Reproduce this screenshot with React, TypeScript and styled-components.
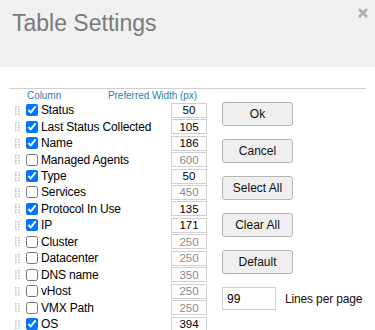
import React from 'react';
import styled, { createGlobalStyle } from 'styled-components';

const GlobalStyle = createGlobalStyle`
  html, body {
    margin: 0;
    padding: 0;
    background: #fff;
  }
  body {
    width: 375px;
    height: 330px;
    overflow: hidden;
    font-family: "Liberation Sans", Arial, sans-serif;
  }
`;

const Dialog = styled.div`
  position: relative;
  width: 375px;
  height: 330px;
  background: #fff;
`;

const Header = styled.div`
  height: 67px;
  box-sizing: border-box;
  padding: 10px 0 0 12px;
  background: #f0f0f0;
`;

const Title = styled.h1`
  margin: 0;
  font-size: 23px;
  font-weight: normal;
  line-height: 26px;
  color: #7a7a7a;
`;

const CloseButton = styled.button`
  position: absolute;
  top: 7px;
  right: 6px;
  width: 12px;
  height: 12px;
  padding: 0;
  border: 0;
  background: transparent;
  display: flex;
  align-items: center;
  justify-content: center;
`;

const Content = styled.div`
  padding: 0 9px;
`;

const Rule = styled.div`
  margin-top: 21px;
  height: 1px;
  background: #cfcfcf;
`;

const Body = styled.div`
  display: flex;
  align-items: flex-start;
`;

const ColumnList = styled.div`
  width: 198px;
`;

const ListHeader = styled.div`
  height: 13px;
  display: flex;
  align-items: center;
  justify-content: space-between;
  padding: 0 10px 0 18px;
  font-size: 10px;
  letter-spacing: -0.05px;
  color: #2f82ad;
`;

const Row = styled.div`
  height: 16.46px;
  display: flex;
  align-items: center;
  padding-left: 6px;
`;

const Handle = styled.svg`
  flex: none;
  margin-right: 6px;
`;

const Check = styled.input`
  flex: none;
  width: 12px;
  height: 12px;
  margin: 0 3px 0 0;
  accent-color: #0075ff;
`;

const Label = styled.span`
  flex: 1;
  font-size: 12px;
  letter-spacing: -0.15px;
  color: #000;
  white-space: nowrap;
`;

const WidthInput = styled.input<{ $active: boolean }>`
  flex: none;
  width: 36px;
  height: 15px;
  box-sizing: border-box;
  padding: 0;
  border: 1px solid #d0d0d0;
  font-family: "Liberation Sans", Arial, sans-serif;
  font-size: 11.5px;
  text-align: center;
  color: ${(p) => (p.$active ? '#000' : '#8a8a8a')};
  background: #fff;
`;

const Actions = styled.div`
  margin-left: 15px;
  padding-top: 13px;
  display: flex;
  flex-direction: column;
  gap: 13px;
`;

const ActionButton = styled.button`
  width: 71px;
  height: 24px;
  padding: 0;
  border: 1px solid #b4b4b4;
  border-radius: 3px;
  background: #efefef;
  font-family: "Liberation Sans", Arial, sans-serif;
  font-size: 12px;
  color: #111;
`;

const LinesRow = styled.div`
  display: flex;
  align-items: center;
  gap: 9px;
`;

const LinesInput = styled.input`
  width: 54px;
  height: 23px;
  box-sizing: border-box;
  padding: 0 4px;
  border: 1px solid #cfcfcf;
  font-family: "Liberation Sans", Arial, sans-serif;
  font-size: 12px;
  color: #000;
`;

const LinesLabel = styled.span`
  font-size: 12px;
  letter-spacing: -0.15px;
  color: #111;
  white-space: nowrap;
`;

const columns = [
  { name: 'Status', width: 50, on: true },
  { name: 'Last Status Collected', width: 105, on: true },
  { name: 'Name', width: 186, on: true },
  { name: 'Managed Agents', width: 600, on: false },
  { name: 'Type', width: 50, on: true },
  { name: 'Services', width: 450, on: false },
  { name: 'Protocol In Use', width: 135, on: true },
  { name: 'IP', width: 171, on: true },
  { name: 'Cluster', width: 250, on: false },
  { name: 'Datacenter', width: 250, on: false },
  { name: 'DNS name', width: 350, on: false },
  { name: 'vHost', width: 250, on: false },
  { name: 'VMX Path', width: 250, on: false },
  { name: 'OS', width: 394, on: true },
];

const Grip = () => (
  <Handle width="5" height="9" viewBox="0 0 5 9">
    {[0, 2.5, 5, 7.5].map((y) =>
      [0, 3.2].map((x) => (
        <rect key={`${x}-${y}`} x={x} y={y} width="1.6" height="1.5" fill="#c4c4c4" />
      ))
    )}
  </Handle>
);

const App = () => (
  <Dialog>
    <GlobalStyle />
    <Header>
      <Title>Table Settings</Title>
    </Header>
    <CloseButton aria-label="Close">
      <svg width="10" height="10" viewBox="0 0 10 10">
        <path d="M1 1 L9 9 M9 1 L1 9" stroke="#b0b0b0" strokeWidth="2.6" />
      </svg>
    </CloseButton>
    <Content>
      <Rule />
      <Body>
        <ColumnList>
          <ListHeader>
            <span>Column</span>
            <span>Preferred Width (px)</span>
          </ListHeader>
          {columns.map((c) => (
            <Row key={c.name}>
              <Grip />
              <Check type="checkbox" defaultChecked={c.on} />
              <Label>{c.name}</Label>
              <WidthInput $active={c.on} defaultValue={c.width} />
            </Row>
          ))}
        </ColumnList>
        <Actions>
          <ActionButton>Ok</ActionButton>
          <ActionButton>Cancel</ActionButton>
          <ActionButton>Select All</ActionButton>
          <ActionButton>Clear All</ActionButton>
          <ActionButton>Default</ActionButton>
          <LinesRow>
            <LinesInput defaultValue="99" />
            <LinesLabel>Lines per page</LinesLabel>
          </LinesRow>
        </Actions>
      </Body>
    </Content>
  </Dialog>
);

export default App;
